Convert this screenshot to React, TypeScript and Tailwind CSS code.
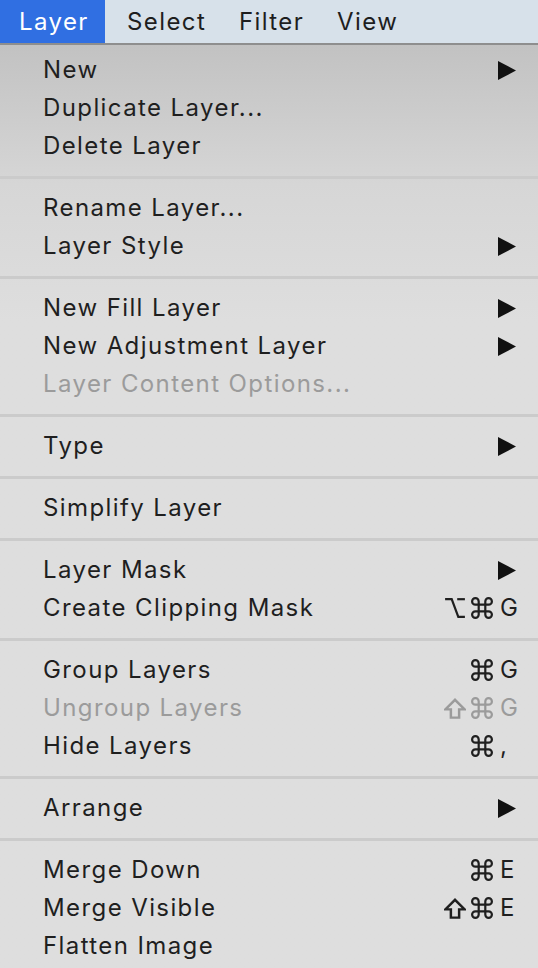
import React from "react";

type Item =
  | { kind: "sep" }
  | {
      kind: "item";
      label: string;
      disabled?: boolean;
      sub?: boolean;
      mods?: ("opt" | "cmd" | "shift")[];
      key?: string;
    };

const items: Item[] = [
  { kind: "item", label: "New", sub: true },
  { kind: "item", label: "Duplicate Layer..." },
  { kind: "item", label: "Delete Layer" },
  { kind: "sep" },
  { kind: "item", label: "Rename Layer..." },
  { kind: "item", label: "Layer Style", sub: true },
  { kind: "sep" },
  { kind: "item", label: "New Fill Layer", sub: true },
  { kind: "item", label: "New Adjustment Layer", sub: true },
  { kind: "item", label: "Layer Content Options...", disabled: true },
  { kind: "sep" },
  { kind: "item", label: "Type", sub: true },
  { kind: "sep" },
  { kind: "item", label: "Simplify Layer" },
  { kind: "sep" },
  { kind: "item", label: "Layer Mask", sub: true },
  { kind: "item", label: "Create Clipping Mask", mods: ["opt", "cmd"], key: "G" },
  { kind: "sep" },
  { kind: "item", label: "Group Layers", mods: ["cmd"], key: "G" },
  { kind: "item", label: "Ungroup Layers", disabled: true, mods: ["shift", "cmd"], key: "G" },
  { kind: "item", label: "Hide Layers", mods: ["cmd"], key: "," },
  { kind: "sep" },
  { kind: "item", label: "Arrange", sub: true },
  { kind: "sep" },
  { kind: "item", label: "Merge Down", mods: ["cmd"], key: "E" },
  { kind: "item", label: "Merge Visible", mods: ["shift", "cmd"], key: "E" },
  { kind: "item", label: "Flatten Image" },
];

function Mod({ m }: { m: "opt" | "cmd" | "shift" }) {
  const common = {
    fill: "none",
    stroke: "currentColor",
    strokeWidth: 2,
    strokeLinecap: "round" as const,
    strokeLinejoin: "round" as const,
  };
  if (m === "cmd")
    return (
      <svg width="22" height="22" viewBox="2 2 20 20" {...common}>
        <path d="M15 6v12a3 3 0 1 0 3-3H6a3 3 0 1 0 3 3V6a3 3 0 1 0-3 3h12a3 3 0 1 0-3-3" />
      </svg>
    );
  if (m === "shift")
    return (
      <svg width="22" height="22" viewBox="4 3.5 16 16" {...common} strokeWidth={1.8} strokeLinecap="butt" strokeLinejoin="miter">
        <path d="M9 18.5v-6H5l7-7 7 7h-4v6H9z" />
      </svg>
    );
  return (
    <svg width="22" height="22" viewBox="2 2 20 20" {...common} strokeLinecap="butt" strokeLinejoin="miter">
      <path d="M3 4h6l6 16h6" />
      <path d="M14 4h7" />
    </svg>
  );
}

export default function App() {
  return (
    <div
      className="w-[538px] h-[968px] overflow-hidden bg-[#dedede] tracking-[1.4px]"
      style={{ fontFamily: "Inter, 'Noto Sans', 'DejaVu Sans', sans-serif" }}
    >
      <div className="h-[43px] flex items-center bg-[#d7e1ea] text-[24px] text-[#1e1e1e]">
        <div className="h-full w-[105px] bg-[#306fe2] text-white flex items-center pl-[19px]">Layer</div>
        <div className="h-full w-[134px] flex items-center pl-[22px]">Select</div>
        <div className="h-full w-[98px] flex items-center">Filter</div>
        <div className="h-full flex items-center">View</div>
      </div>
      <div className="h-[2px] bg-[#8e8e8e]" />
      <div className="pt-[6px] bg-gradient-to-b from-[#c2c2c2] via-[#d6d6d6] via-[15%] to-[#dedede] to-[30%] h-[923px]">
        {items.map((it, i) =>
          it.kind === "sep" ? (
            <div key={i} className="mt-[11px] mb-[10px] h-[3px] bg-[#cbcbcb]" />
          ) : (
            <div
              key={i}
              className={`h-[38px] flex items-center pl-[43px] pr-[16px] text-[24px] ${
                it.disabled ? "text-[#9b9b9b]" : "text-[#1f1f1f]"
              }`}
            >
              <span className="flex-1">{it.label}</span>
              {it.sub && (
                <svg width="18" height="19" viewBox="0 0 18 19" className="mr-[6px]">
                  <polygon points="0,0 18,9.5 0,19" fill="#111" />
                </svg>
              )}
              {it.key && (
                <div className="flex items-center">
                  <div className="flex items-center gap-[5px] mr-[7px]">
                    {it.mods?.map((m, j) => (
                      <Mod key={j} m={m} />
                    ))}
                  </div>
                  <span className="w-[22px] text-left">{it.key}</span>
                </div>
              )}
            </div>
          )
        )}
      </div>
    </div>
  );
}
